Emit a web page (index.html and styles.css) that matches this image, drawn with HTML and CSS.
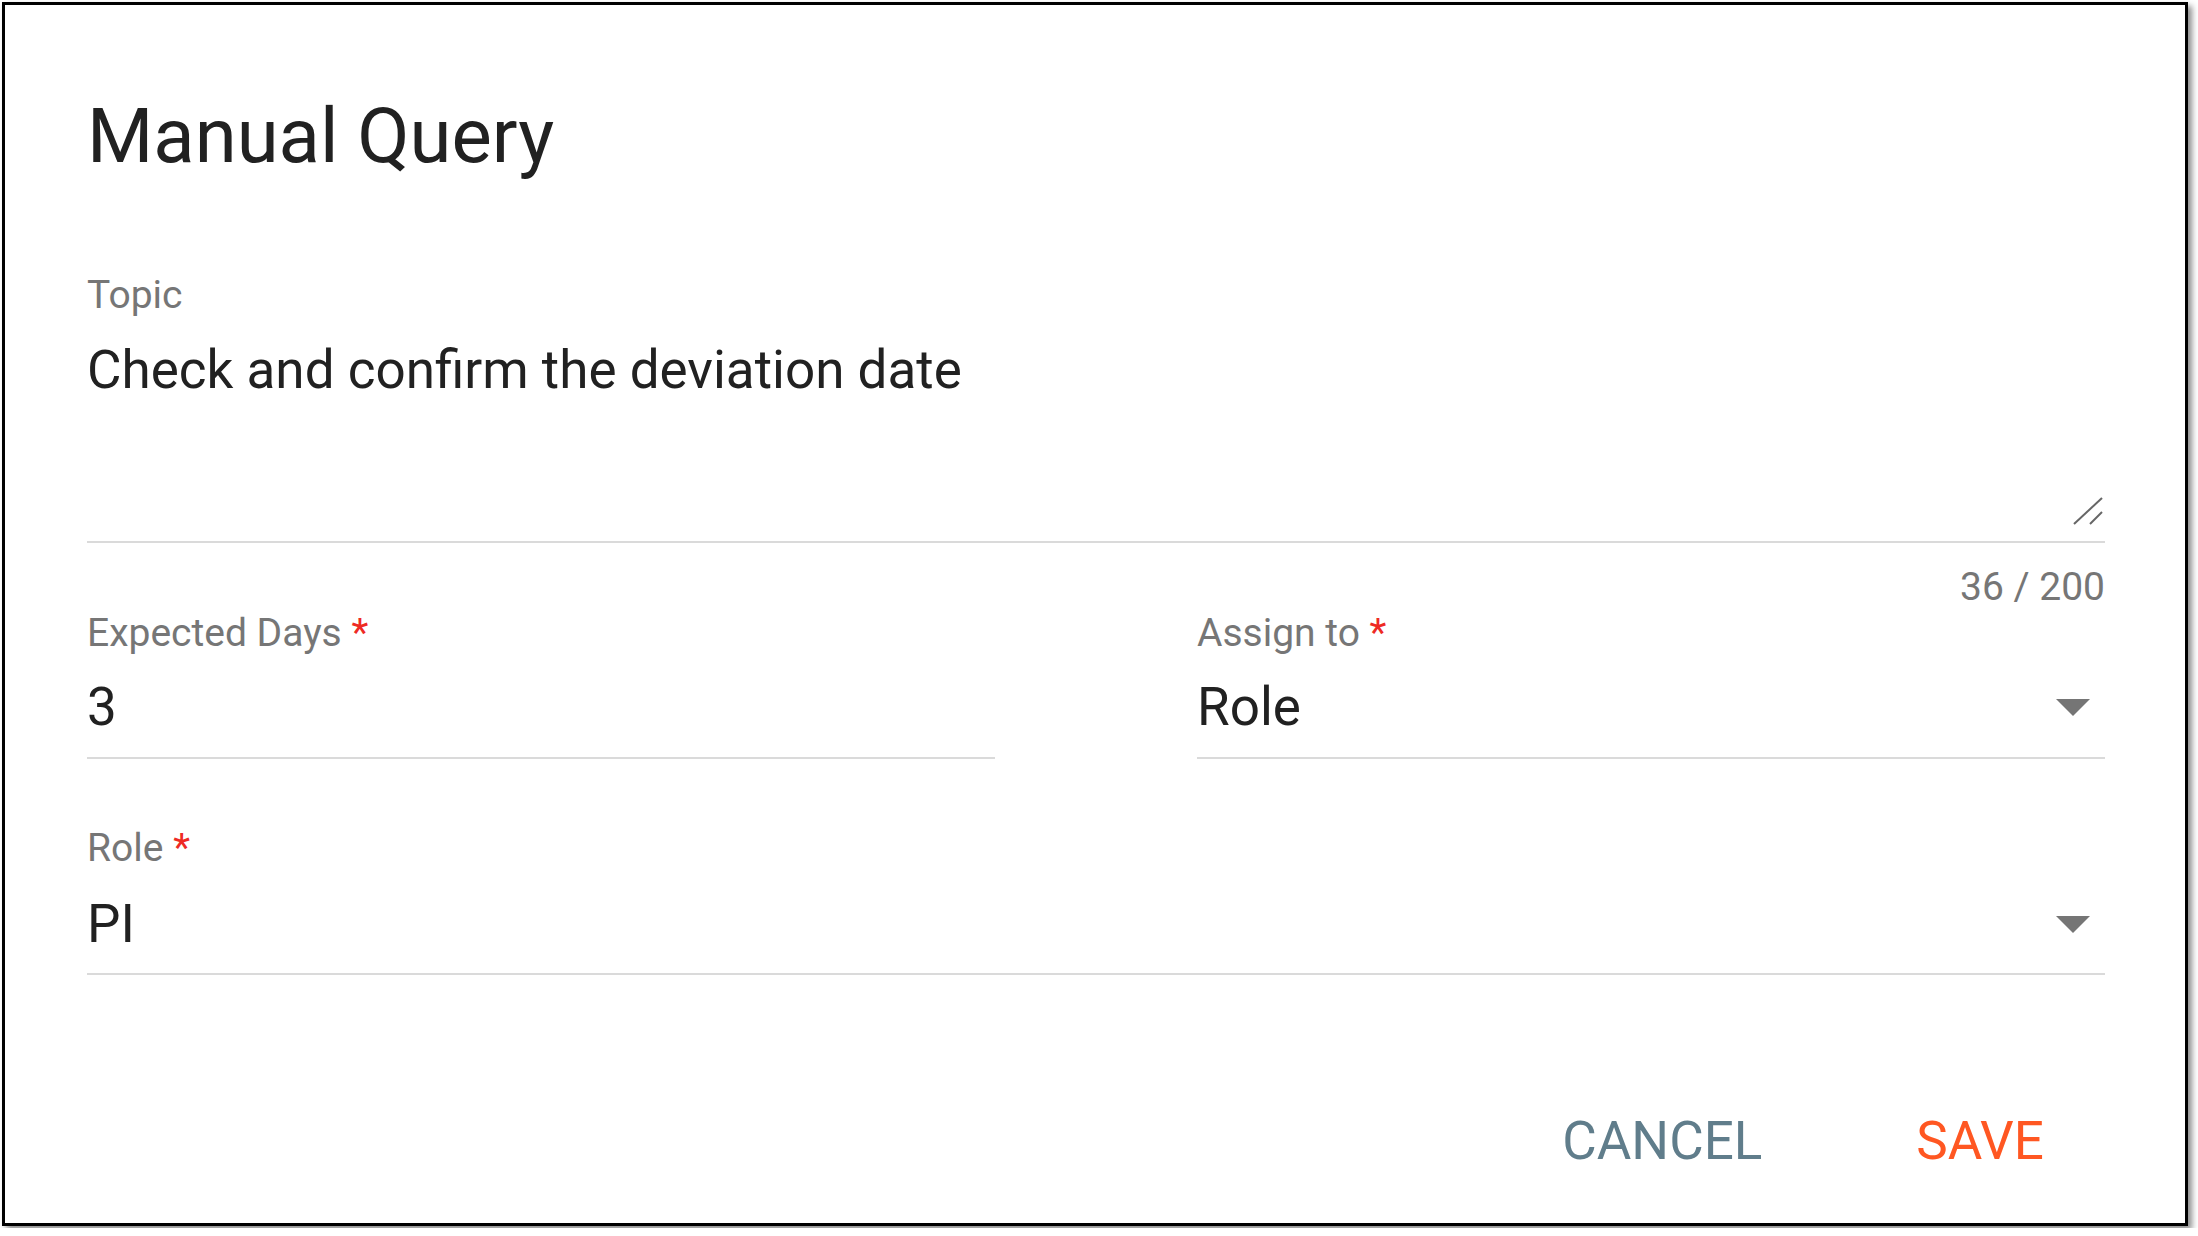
FILE: index.html
```html
<!DOCTYPE html>
<html lang="en">
<head>
    <meta charset="UTF-8">
    <meta name="viewport" content="width=device-width, initial-scale=1.0">
    <title>Manual Query</title>
    <link rel="stylesheet" href="styles.css">
</head>
<body>
    <div class="dialog">
        <h1 class="dialog-title">Manual Query</h1>

        <div class="field topic">
            <label class="field-label">Topic</label>
            <div class="textarea">
                Check and confirm the deviation date
                <svg class="resize" width="30" height="28" viewBox="0 0 30 28">
                    <line x1="1" y1="27" x2="29" y2="1" />
                    <line x1="17" y1="27" x2="29" y2="15" />
                </svg>
            </div>
        </div>
        <div class="counter">36 / 200</div>

        <div class="row">
            <div class="field">
                <label class="field-label">Expected Days <span class="req">*</span></label>
                <div class="control">3</div>
            </div>
            <div class="field">
                <label class="field-label">Assign to <span class="req">*</span></label>
                <div class="control select">Role<span class="arrow"></span></div>
            </div>
        </div>

        <div class="field role">
            <label class="field-label">Role <span class="req">*</span></label>
            <div class="control select">PI<span class="arrow"></span></div>
        </div>

        <div class="actions">
            <button class="btn cancel-btn">CANCEL</button>
            <button class="btn save-btn">SAVE</button>
        </div>
    </div>
</body>
</html>
```

FILE: styles.css
```css
body {
    font-family: Roboto, "Liberation Sans", Arial, sans-serif;
    background-color: #fff;
    margin: 0;
    padding: 2px;
}
.dialog {
    box-sizing: border-box;
    width: 2186px;
    height: 1224px;
    border: 3px solid #000;
    background-color: #fff;
    box-shadow: 4px 4px 6px rgba(0, 0, 0, 0.45);
    padding: 86px 80px 0 82px;
    color: #212121;
}
.dialog-title {
    margin: 0;
    font-size: 76px;
    font-weight: 400;
    line-height: 90px;
}
.field-label {
    display: block;
    font-size: 39px;
    line-height: 44px;
    color: #767676;
}
.field-label .req {
    color: #ee2a24;
}
.topic {
    margin-top: 92px;
}
.textarea {
    position: relative;
    margin-top: 21px;
    height: 203px;
    font-size: 53px;
    line-height: 64px;
    border-bottom: 2px solid #dadada;
}
.textarea .resize {
    position: absolute;
    right: 2px;
    bottom: 16px;
}
.resize line {
    stroke: #666;
    stroke-width: 2;
}
.counter {
    margin-top: 22px;
    text-align: right;
    font-size: 39px;
    line-height: 44px;
    color: #767676;
}
.row {
    display: grid;
    grid-template-columns: 1fr 1fr;
    column-gap: 202px;
    margin-top: 2px;
}
.control {
    margin-top: 20px;
    font-size: 53px;
    line-height: 64px;
    padding-bottom: 18px;
    border-bottom: 2px solid #dadada;
}
.control.select {
    display: flex;
    justify-content: space-between;
    align-items: center;
    padding-right: 15px;
}
.arrow {
    width: 0;
    height: 0;
    border-left: 17px solid transparent;
    border-right: 17px solid transparent;
    border-top: 17px solid #757575;
}
.role {
    margin-top: 67px;
}
.role .control {
    margin-top: 22px;
    padding-bottom: 17px;
}
.actions {
    display: flex;
    justify-content: flex-end;
    gap: 154px;
    margin-top: 134px;
    padding-right: 61px;
}
.btn {
    background: none;
    border: none;
    padding: 0;
    font-family: Roboto, "Liberation Sans", Arial, sans-serif;
    font-size: 53px;
    line-height: 64px;
    cursor: pointer;
}
.cancel-btn {
    color: #607d8b;
}
.save-btn {
    color: #ff5722;
}
```
